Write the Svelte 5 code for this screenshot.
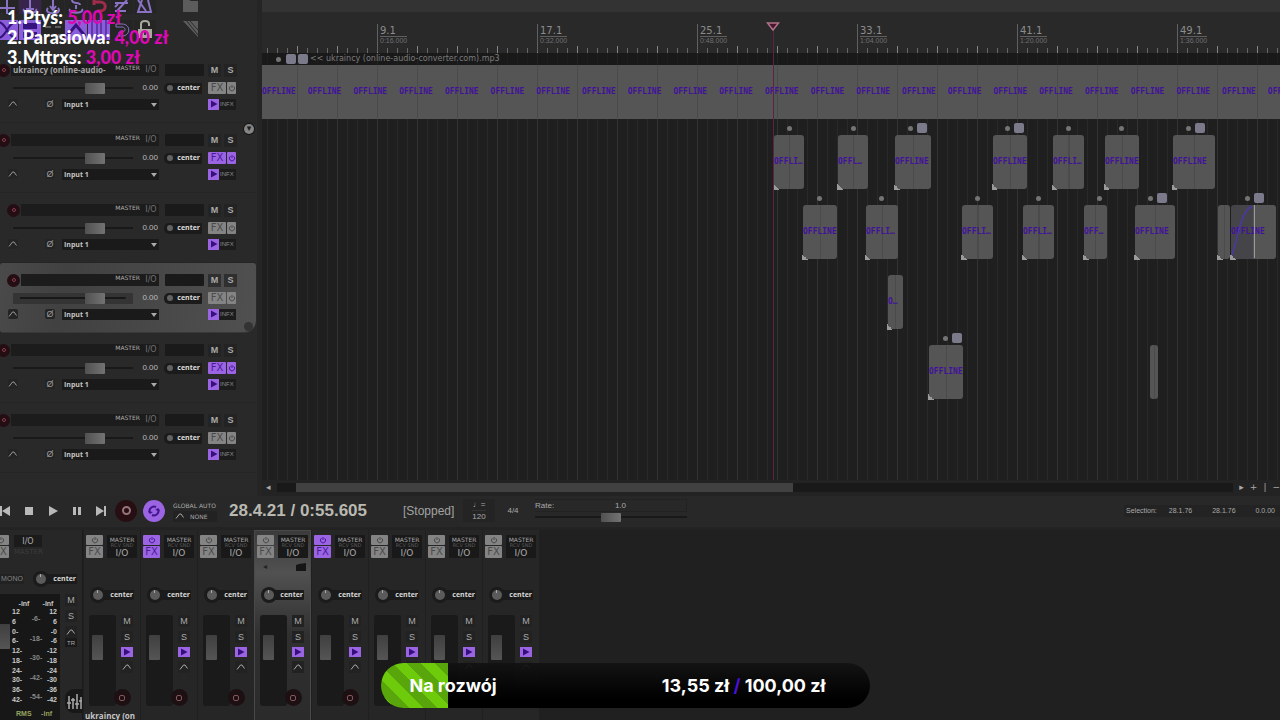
<script>
  const donors = [
    { name: 'Ptyś', amount: '5,00 zł' },
    { name: 'Parasiowa', amount: '4,00 zł' },
    { name: 'Mttrxs', amount: '3,00 zł' }
  ];

  const tracks = [
    { name: 'ukraincy (online-audio-', fx: false, nested: false, selected: false },
    { name: '', fx: true, nested: false, selected: false },
    { name: '', fx: false, nested: true, selected: false },
    { name: '', fx: false, nested: true, selected: true },
    { name: '', fx: true, nested: false, selected: false },
    { name: '', fx: false, nested: false, selected: false }
  ];

  // Clip start, width and marker dot offset are in timeline pixels.
  const lanes = [
    [],
    [
      { x: 512, w: 30, t: 'OFFLI…', dot: 13 },
      { x: 576, w: 30, t: 'OFFL…', dot: 13 },
      { x: 633, w: 36, t: 'OFFLINE', dot: 13, badge: true },
      { x: 731, w: 34, t: 'OFFLINE', dot: 12, badge: true },
      { x: 791, w: 31, t: 'OFFLI…', dot: 13 },
      { x: 843, w: 34, t: 'OFFLINE', dot: 14 },
      { x: 911, w: 42, t: 'OFFLINE', dot: 13, badge: true }
    ],
    [
      { x: 541, w: 34, t: 'OFFLINE', dot: 14 },
      { x: 604, w: 32, t: 'OFFLI…', dot: 13 },
      { x: 700, w: 31, t: 'OFFLI…', dot: 13 },
      { x: 761, w: 31, t: 'OFFLI…', dot: 13 },
      { x: 822, w: 23, t: 'OFF…', dot: 13 },
      { x: 873, w: 40, t: 'OFFLINE', dot: 13, badge: true },
      { x: 956, w: 12, t: '' },
      { x: 969, w: 45, t: 'OFFLINE', dot: 14, badge: true, fade: true }
    ],
    [{ x: 626, w: 15, t: 'O…' }],
    [
      { x: 667, w: 34, t: 'OFFLINE', dot: 14, badge: true },
      { x: 888, w: 8, t: '', bare: true }
    ],
    []
  ];

  const marks = [
    { x: 115, bar: '9.1', time: '0:16.000' },
    { x: 275, bar: '17.1', time: '0:32.000' },
    { x: 435, bar: '25.1', time: '0:48.000' },
    { x: 595, bar: '33.1', time: '1:04.000' },
    { x: 755, bar: '41.1', time: '1:20.000' },
    { x: 915, bar: '49.1', time: '1:36.000' }
  ];

  const strips = [
    { name: 'ukraincy (on', n: 1 },
    { name: '', n: 2, fx: true },
    { name: '', n: 3 },
    { name: '', n: 4, selected: true },
    { name: '', n: 5, fx: true },
    { name: '', n: 6 },
    { name: '', n: 7 },
    { name: '', n: 8 }
  ];

  const scaleLeft = ['12', '6', '0-', '6-', '12-', '18-', '24-', '30-', '36-', '42-'];
  const scaleMid = ['-6-', '-18-', '-30-', '-42-', '-54-'];
  const scaleRight = ['12', '6', '-0', '-6', '-12', '-18', '-24', '-30', '-36', '-42'];

  const goal = { raised: 13.55, target: 100 };
</script>

{#snippet power()}
  <svg viewBox="0 0 8 8" width="8" height="8" fill="none" stroke="currentColor"><path d="M2.4 2.2a2.6 2.6 0 1 0 3.2 0M4 1v3" /></svg>
{/snippet}

{#snippet envelope()}
  <svg viewBox="0 0 10 8" width="10" height="8" fill="none" stroke="currentColor"><path d="M1 6.500L4.500 2H6l2.500 3.500" /></svg>
{/snippet}

{#snippet playGlyph()}
  <svg viewBox="0 0 8 8" width="8" height="8" fill="currentColor"><path d="M1 .5v7L7.5 4z" /></svg>
{/snippet}

<div class="app">
  <div class="workspace">
    <aside class="panel">
      <div class="toolbar">
        <button class="tool" aria-label="New project"><svg viewBox="0 0 20 20"><path d="M10 0v15M2 8h16M4 14c3 4 9 4 12 0" /></svg></button>
        <button class="tool dim" aria-label="Open project"><svg viewBox="0 0 20 20"><path d="M10 0v9M4 9c-3 5 15 5 12 0M6 9h8" /></svg></button>
        <button class="tool" aria-label="Save project"><svg viewBox="0 0 20 20"><path d="M10 0v9M5 8c-6 7 16 7 10 0M7 6l3 4 3-4" /></svg></button>
        <button class="tool" aria-label="Project settings"><svg viewBox="0 0 20 20"><path d="M6 0c0 5 8 1 8 5M10 5v4M4 9c-3 5 15 5 12 0" /></svg></button>
        <button class="tool red" aria-label="Undo"><svg viewBox="0 0 20 20"><path d="M4 2h7c7 0 7 9 0 9H8M5 0v5" stroke-width="3" /></svg></button>
        <button class="tool" aria-label="Redo"><svg viewBox="0 0 20 20"><path d="M3 3h13M15 0L5 11M3 11h11M3 7l3-3" /></svg></button>
        <button class="tool" aria-label="Metronome"><svg viewBox="0 0 20 20"><path d="M7 0L3 12h13L13 0M11 11L3 0" /></svg></button>
        <span></span>
        <button class="tool grey" aria-label="Folder"><svg viewBox="0 0 20 20"><path d="M2 0h6l2 1h7v11H2z" fill="currentColor" stroke="none" /></svg></button>

        <button class="tool on" aria-label="Auto-crossfade"><svg viewBox="0 0 20 20"><path d="M1 2c8 0 10 16 18 16M1 18C9 18 11 2 19 2" /></svg></button>
        <button class="tool on" aria-label="Item grouping"><svg viewBox="0 0 20 20"><path d="M4 4h12v4H4zM4 13h12v4H4z" fill="currentColor" /></svg></button>
        <button class="tool grey" aria-label="Ripple editing"><svg viewBox="0 0 20 20"><path d="M2 6h6v2H2zM12 6h6v2h-6zM1 14h4v3H1zM8 14h4v3H8zM15 14h4v3h-4z" fill="currentColor" stroke="none" /></svg></button>
        <button class="tool on" aria-label="Envelope points"><svg viewBox="0 0 20 20"><path d="M1 16L10 5l9 11" stroke-width="3" /></svg></button>
        <button class="tool on" aria-label="Grid lines"><svg viewBox="0 0 20 20"><path d="M3 0v20M8 0v20M12 0v20M17 0v20" stroke-width="1" /></svg></button>
        <button class="tool" aria-label="Snap"><svg viewBox="0 0 20 20"><path d="M4 4h6c9 0 9 12 0 12H7M4 4v3h6c4 0 4 5 0 5H7v4" stroke-width="1" /></svg></button>
        <button class="tool light" aria-label="Lock"><svg viewBox="0 0 20 20"><path d="M6 9V4c0-4 8-4 8 0v2" /><path d="M4 10h12v7H4z" fill="currentColor" /><path d="M10 12v3" stroke="#333" /></svg></button>
        <span></span>
        <button class="tool grey" aria-label="Theme"><svg viewBox="0 0 20 20"><path d="M2 1h15v16z" fill="currentColor" stroke="none" /><path d="M5 0l12 15M9 1l8 9" stroke="#2b2b2b" stroke-width="1" /></svg></button>
      </div>

      {#each tracks as track, i}
        <section class="track" class:selected={track.selected} class:nested={track.nested} aria-label="Track {i + 1}">
          <div class="line">
            <button class="rec" aria-label="Record arm"><i></i></button>
            <div class="name"><span>{track.name}</span><em>MASTER</em><button class="io">I/O</button></div>
            <div class="meter"></div>
            <div class="pair"><button>M</button><button>S</button></div>
          </div>
          <div class="line second">
            <input class="volume" type="range" min="0" max="100" value="72" aria-label="Volume" />
            <output>0.00</output>
            <div class="pan"><i></i><span>center</span></div>
            <div class="fx" class:active={track.fx}><button>FX</button><button aria-label="FX bypass">{@render power()}</button></div>
          </div>
          <div class="line third">
            <button class="small" aria-label="Envelopes">{@render envelope()}</button>
            <button class="small phase">Ø</button>
            <div class="choose">
              <select aria-label="Record input"><option>Input 1</option></select>
            </div>
            <div class="monitor"><button aria-label="Monitor">{@render playGlyph()}</button><span>INFX</span></div>
          </div>
          {#if i === 1}<i class="collapse">▾</i>{/if}
          {#if track.selected}<i class="corner"></i>{/if}
        </section>
      {/each}
    </aside>

    <main class="arrange">
      <div class="strip-top"></div>
      <div class="ruler">
        {#each marks as m}
          <div class="mark" style="left: {m.x}px"><b>{m.bar}</b><small>{m.time}</small></div>
        {/each}
      </div>
      <div class="lanes">
        {#each lanes as lane, i}
          <div class="lane">
            {#if i === 0}
              <div class="title"><i class="dot"></i><i class="badge"></i><i class="badge"></i><span>&lt;&lt; ukraincy (online-audio-converter.com).mp3</span></div>
              <div class="long">
                {#each Array(30) as _}<span>OFFLINE</span>{/each}
              </div>
            {/if}
            {#each lane as c}
              <div class="clip" class:faded={c.fade} style="left: {c.x}px; width: {c.w}px">
                {#if c.dot}<i class="dot" style="left: {c.dot}px"></i>{/if}
                {#if c.badge}<i class="badge" style="left: {c.dot + 9}px"></i>{/if}
                <span>{c.t}</span>
                {#if c.fade}<svg viewBox="0 0 24 53" width="24" height="53" fill="none"><path d="M0 52C8 34 8 8 21 1" stroke="#4a37a8" stroke-width="1.500" /><path d="M23.500 0v53" stroke="#999" /></svg>{/if}
                {#if !c.bare}<i class="handle"></i>{/if}
              </div>
            {/each}
          </div>
        {/each}
      </div>
      <div class="scroll"><span>◂</span><div class="rail"><div class="grip"></div></div><span>▸</span><span>+</span><span>|</span><span>−</span></div>
      <div class="playhead">
        <svg viewBox="0 0 14 10" width="14" height="10"><path d="M1.500 1h11L7 8z" fill="#4a1530" stroke="#b07488" stroke-width="1.500" /></svg>
      </div>
    </main>
  </div>

  <div class="transport">
    <div class="buttons">
      <button aria-label="Go to start"><svg viewBox="0 0 12 12"><path d="M1 1h2v10H1zM11 1v10L3 6z" /></svg></button>
      <button aria-label="Stop"><svg viewBox="0 0 12 12"><path d="M2 2h8v8H2z" /></svg></button>
      <button aria-label="Play"><svg viewBox="0 0 12 12"><path d="M2 1v10l9-5z" /></svg></button>
      <button aria-label="Pause"><svg viewBox="0 0 12 12"><path d="M2 2h3v8H2zM7 2h3v8H7z" /></svg></button>
      <button aria-label="Go to end"><svg viewBox="0 0 12 12"><path d="M9 1h2v10H9zM1 1v10l8-5z" /></svg></button>
    </div>
    <button class="round record" aria-label="Record"><i></i></button>
    <button class="round loop" aria-label="Repeat"><svg viewBox="0 0 14 14" width="14" height="14" fill="none" stroke="currentColor" stroke-width="2"><path d="M3 9A4.500 4.500 0 0 1 9 3M11 5a4.500 4.500 0 0 1-6 6" /><path d="M1 7l2 3 3-2zM13 7l-2-3-3 2z" fill="currentColor" stroke="none" /></svg></button>
    <div class="auto"><span>GLOBAL AUTO</span><span class="none">{@render envelope()} NONE</span></div>
    <div class="time">28.4.21 / 0:55.605</div>
    <div class="state">[Stopped]</div>
    <div class="tempo"><span>♩=</span><span>120</span></div>
    <div class="signature">4/4</div>
    <div class="rate">
      <div><label for="rate">Rate:</label><output>1.0</output></div>
      <input id="rate" class="volume" type="range" min="0" max="100" value="50" />
    </div>
    <div class="selection"><span>Selection:</span><span>28.1.76</span><span>28.1.76</span><span>0.0.00</span></div>
  </div>

  <div class="mixer">
    <section class="master" aria-label="Master">
      <div class="head">
        <div class="fxcol"><button aria-label="FX bypass">{@render power()}</button><button>FX</button></div>
        <div class="mio"><button>I/O</button><span>MASTER</span></div>
      </div>
      <div class="mpan"><button>MONO</button><i class="knob"></i><span class="center">center</span></div>
      <div class="body">
        <div class="levels">
          <input class="fader" type="range" min="0" max="100" value="55" aria-label="Master volume" />
          <div class="peaks"><span>-inf</span><span>-inf</span></div>
          <div class="scales">
            <div>{#each scaleLeft as s}<span>{s}</span>{/each}</div>
            <div class="mid">{#each scaleMid as s}<span>{s}</span>{/each}</div>
            <div class="right">{#each scaleRight as s}<span>{s}</span>{/each}</div>
          </div>
          <div class="rms"><span>RMS</span><span>-inf</span></div>
        </div>
        <div class="side">
          <button>M</button><button>S</button>
          <button aria-label="Envelopes">{@render envelope()}</button>
          <button class="trim">TR</button>
          <button class="sliders" aria-label="Mixer settings"><svg viewBox="0 0 16 16" width="16" height="16" fill="none" stroke="currentColor" stroke-width="1.500"><path d="M3 3v13M7 5v11M11 1v15M15 4v12M1 10h4M5 7h4M9 11h4M13 8h3" /></svg></button>
        </div>
      </div>
    </section>

    {#each strips as s}
      <section class="channel" class:selected={s.selected} aria-label="Channel {s.n}">
        <div class="head">
          <div class="fxcol" class:active={s.fx}><button aria-label="FX bypass">{@render power()}</button><button>FX</button></div>
          <button class="route"><span>MASTER</span><em>RCV SND</em><b>I/O</b></button>
        </div>
        <div class="folder">
          {#if s.selected}<span>◂</span><svg viewBox="0 0 10 8" width="10" height="8"><path d="M0 2l3-1 7-1v8H0z" fill="#161616" /></svg>{:else}<span></span>{/if}
        </div>
        <div class="cpan"><i class="knob"></i><span class="center">center</span></div>
        <div class="strip">
          <div class="well"><input class="fader" type="range" min="0" max="100" value="70" aria-label="Volume" /></div>
          <div class="side">
            <button>M</button><button>S</button>
            <button class="mon" aria-label="Monitor">{@render playGlyph()}</button>
            <button aria-label="Envelopes">{@render envelope()}</button>
            <button class="arm" aria-label="Record arm"><i></i></button>
          </div>
        </div>
        <div class="label">{s.name}</div>
      </section>
    {/each}
  </div>

  <ol class="donors">
    {#each donors as d, i}
      <li><span>{i + 1}.</span><span>{d.name}: <b>{d.amount}</b></span></li>
    {/each}
  </ol>

  <div class="goal">
    <div class="fill" style="width: {(goal.raised / goal.target) * 100}%"></div>
    <span>Na rozwój</span>
    <span>13,55 zł <i>/</i> 100,00 zł</span>
  </div>
</div>

<style>
  :global(body) { margin: 0; background: #202020; }
  .app, .app * { box-sizing: border-box; }
  .app {
    position: relative;
    display: flex;
    flex-direction: column;
    height: 100vh;
    overflow: hidden;
    background: #282828;
    color: #aaa;
    font: 8px/12px "Liberation Sans", sans-serif;
  }
  button { border: 0; padding: 0; margin: 0; background: none; color: inherit; font: inherit; display: flex; align-items: center; justify-content: center; }
  i { display: block; font-style: normal; }
  svg { display: block; flex: none; }

  .workspace { display: grid; grid-template-columns: 262px minmax(0, 1fr); flex: none; }
  .panel { background: #292929; border-right: 5px solid #252525; padding-bottom: 21px; overflow: hidden; }
  .toolbar { display: grid; grid-template-columns: repeat(9, 22px); grid-template-rows: 14px 20px; row-gap: 6px; column-gap: 1px; height: 53px; margin-left: -4px; }
  .tool { color: #8a72c4; background: #252525; overflow: hidden; align-items: flex-start; }
  .tool svg { width: 20px; height: 20px; fill: none; stroke: currentColor; stroke-width: 2; }
  .tool.dim { background: #38254c; }
  .tool.on { background: #8b5ddb; color: #35127c; }
  .tool.red { color: #a02c4c; }
  .tool.grey { color: #5c5c5c; }
  .tool.light { color: #a8a8a0; }
  .toolbar .tool:nth-child(9n) { background: none; }

  .track { position: relative; height: 70px; padding: 11px 0 0; width: 256px; border-bottom: 1px solid #252525; }
  .track.selected { background: linear-gradient(100deg, #4a4a4a, #414141 25%, #505050); border-radius: 3px 3px 12px 3px; border-color: #383838; }
  .line { display: flex; align-items: center; height: 12px; }
  .second { margin-top: 6px; padding-left: 13px; }
  .third { margin-top: 4px; padding-left: 8px; }
  .rec { width: 13px; height: 13px; margin: 0 0 0 -3px; border-radius: 50%; background: #240d13; flex: none; }
  .nested .rec { margin-left: 7px; }
  .rec i { width: 4px; height: 4px; border: 1px solid #874050; border-radius: 50%; }
  .name { flex: none; width: 148px; display: flex; align-items: center; height: 12px; margin-left: 1px; background: #1c1c1c; padding-right: 1px; }
  .nested .name { width: 138px; }
  .name span { flex: 1; white-space: nowrap; font: 700 8px/12px "Open Sans", sans-serif; color: #a5a5a5; padding-left: 2px; }
  .name em { font: 6px/8px "DejaVu Sans", sans-serif; align-self: flex-start; margin: 0 4px 0 1px; color: #b0b0b0; }
  .io { width: 14px; font: 8px/12px "DejaVu Sans", sans-serif; color: #717171; }
  .meter { width: 39px; height: 12px; margin: 0 4px 0 6px; background: #1a1a1a; border-radius: 1px; }
  .pair { display: flex; gap: 3px; }
  .pair button { width: 13px; height: 13px; background: #232323; font-weight: 700; font-size: 9px; }
  .selected .pair button { background: #2f2f2f; }
  .volume { appearance: none; width: 120px; height: 11px; margin: 0; background: linear-gradient(#191919, #191919) center / 100% 2px no-repeat; }
  .selected .volume { background: linear-gradient(#181818, #181818) center / 88% 2px no-repeat, #343434; }
  .volume::-webkit-slider-thumb { appearance: none; width: 20px; height: 11px; border-radius: 1px; background: linear-gradient(90deg, #515151, #737373); }
  .second output { width: 25px; text-align: right; color: #bbb; }
  .pan { display: flex; align-items: center; justify-content: space-between; width: 38px; height: 11px; margin: 0 6px; padding: 0 2px 0 3px; border-radius: 5px 1px 1px 5px; background: #1b1b1b; color: #ddd; }
  .pan i { width: 6px; height: 6px; border-radius: 50%; background: #626262; }
  .pan span, .center { font: 700 7px/10px "Open Sans", sans-serif; }
  .fx { display: flex; gap: 1px; color: #4b4b4b; }
  .fx button { height: 12px; background: #848484; font: 9px/12px "DejaVu Sans", sans-serif; border-radius: 1px; overflow: hidden; }
  .fx button:first-child { width: 18px; font-size: 10px; }
  .fx button:last-child { width: 9px; }
  .fx.active button { background: #9b64e3; color: #4a1c99; }
  .small { width: 10px; height: 10px; color: #999; background: #242424; border-radius: 2px; font-size: 9px; }
  .phase { margin: 0 7px 0 27px; }
  .choose { position: relative; width: 97px; height: 11px; background: #1a1a1a; }
  .choose::after { content: ""; position: absolute; right: 2px; top: 4px; border: 3px solid transparent; border-top: 4px solid #aaa; border-bottom: 0; }
  select { appearance: none; width: 100%; height: 11px; border: 0; padding: 0 2px; background: none; color: #c4c4c4; font: 700 7px/11px "Open Sans", sans-serif; display: block; }
  .monitor { display: flex; width: 28px; margin-left: 49px; height: 11px; background: #1c1c1c; font-size: 6px; color: #8b8b8b; gap: 1px; line-height: 11px; white-space: nowrap; }
  .monitor button, .mon { width: 11px; height: 11px; background: #9b64e3; color: #35107c; flex: none; }
  .collapse { position: absolute; right: 2px; top: 1px; width: 10px; height: 10px; border-radius: 50%; background: #858585; color: #1b1b1b; font: 9px/9px "DejaVu Sans", sans-serif; text-align: center; box-shadow: 0 0 0 1px #151515; }
  .corner { position: absolute; right: 3px; bottom: 1px; width: 9px; height: 9px; border-radius: 50%; background: #333; }

  .arrange { position: relative; display: flex; flex-direction: column; background: #202020; overflow: hidden; }
  .strip-top { height: 12px; background: #333; }
  .ruler { position: relative; height: 41px; background:
    repeating-linear-gradient(90deg, #858585 0 1px, transparent 1px 40px) 35px 100% / 100% 7px no-repeat,
    repeating-linear-gradient(90deg, #666 0 1px, transparent 1px 10px) 5px 100% / 100% 5px no-repeat, #292929; }
  .mark { position: absolute; top: 12px; bottom: 1px; padding: 1px 0 0 2px; border-left: 1px solid #606060; color: #8c8c8c; }
  .mark b { display: block; font: 10px/11px "DejaVu Sans", sans-serif; }
  .mark small { display: block; font: 7px/8px "Liberation Sans", sans-serif; color: #707070; border-top: 1px solid #606060; }
  .lanes { height: 427px; background:
    repeating-linear-gradient(90deg, #333 0 1px, transparent 1px 40px) 35px 0 / 100% 100% no-repeat,
    repeating-linear-gradient(90deg, #292929 0 1px, transparent 1px 10px) 5px 0 / 100% 100% no-repeat, #1f1f1f; }
  .lane { position: relative; height: 70px; }
  .title { display: flex; align-items: center; height: 12px; padding-left: 14px; gap: 2px; font: 8px/12px "DejaVu Sans", sans-serif; color: #7c7c7c; white-space: nowrap; background: rgba(20, 20, 20, .5); }
  .dot { width: 5px; height: 5px; border-radius: 50%; background: #747474; }
  .title .dot { margin-right: 3px; }
  .badge { width: 10px; height: 10px; border-radius: 2px; background: #7b7a8b; }
  .long { display: flex; gap: 12px; height: 54px; align-items: center; overflow: hidden; background: repeating-linear-gradient(90deg, #4a4a4a 0 1px, transparent 1px 40px) 35px 0 no-repeat, #555; }
  .long span, .clip span { font: 700 8px/12px "DejaVu Sans Mono", monospace; color: #42129a; }
  .clip { position: absolute; top: 12px; height: 54px; display: flex; align-items: center; border-radius: 3px; background: linear-gradient(90deg, transparent 50%, #4b4b4b 50% calc(50% + 1px), transparent calc(50% + 1px)), #555; }
  .clip .dot { position: absolute; top: -9px; }
  .clip .badge { position: absolute; top: -12px; }
  .clip svg { position: absolute; left: 0; top: 0; }
  .clip.faded { background: linear-gradient(90deg, #454549 50%, #555 50%); }
  .handle { position: absolute; left: -1px; bottom: -1px; width: 6px; height: 6px; background: linear-gradient(45deg, #9b9b9b 50%, transparent 50%); }
  .scroll { display: flex; align-items: center; gap: 6px; height: 16px; padding: 0 0 2px 4px; background: #232323; color: #aaa; font: 9px/14px "DejaVu Sans", sans-serif; }
  .rail { flex: 1; height: 9px; background: #191919; }
  .grip { margin-left: 2%; width: 52%; height: 9px; background: #414141; }
  .playhead { position: absolute; left: 511px; top: 22px; bottom: 16px; width: 1px; background: #5c2342; }
  .playhead svg { margin-left: -7px; }

  .transport { display: flex; align-items: center; flex: none; height: 34px; padding-bottom: 2px; background: #282828; border-bottom: 3px solid #232323; white-space: nowrap; }
  .buttons { display: flex; gap: 12px; margin-left: -1px; fill: #b9b9b9; }
  .buttons button, .buttons svg { width: 12px; height: 12px; }
  .round { width: 22px; height: 22px; border-radius: 50%; margin-left: 6px; flex: none; }
  .record { background: #270e13; margin-left: 8px; }
  .record i { width: 9px; height: 9px; border: 2px solid #97757a; border-radius: 50%; }
  .loop { background: #9b64e3; color: #42158f; }
  .auto { display: flex; flex-direction: column; width: 44px; margin-left: 8px; font: 6px/11px "DejaVu Sans", sans-serif; }
  .none { display: flex; align-items: center; gap: 5px; padding-left: 2px; background: #222; }
  .time { margin-left: 12px; width: 174px; color: #b9b9b1; font: 700 17px/20px "Liberation Sans", sans-serif; }
  .state { width: 60px; color: #a3a3a3; font-size: 12px; }
  .tempo { display: flex; flex-direction: column; align-items: center; width: 32px; line-height: 11px; background: #242424; }
  .tempo span + span { border-top: 1px solid #333; }
  .signature { width: 32px; margin-left: 2px; text-align: center; }
  .rate { width: 156px; margin-left: 4px; padding: 0 2px; }
  .rate div { display: flex; justify-content: space-between; line-height: 11px; border: 1px solid #222; border-left: 0; padding-right: 60px; }
  .rate .volume { width: 100%; display: block; height: 10px; }
  .rate .volume::-webkit-slider-thumb { height: 9px; }
  .selection { display: flex; margin-left: auto; gap: 20px; padding: 0 5px 0 2px; background: #232323; font-size: 7px; }
  .selection span:first-child { margin-right: -8px; }

  .mixer { display: flex; flex: 1; min-height: 0; overflow: hidden; background: #202020; }
  .master { width: 83px; flex: none; background: #272727; border-right: 1px solid #1b1b1b; }
  .head { display: flex; height: 28px; padding-top: 5px; }
  .fxcol { width: 17px; height: 23px; display: grid; grid-template-rows: 10px 12px; gap: 1px; color: #4b4b4b; flex: none; }
  .fxcol button { background: #848484; border-radius: 1px; font: 10px/12px "DejaVu Sans", sans-serif; overflow: hidden; }
  .fxcol.active button { background: #9b64e3; color: #4a1c99; }
  .master .fxcol { margin-left: -8px; }
  .mio { margin-left: 5px; width: 28px; font: 7px/11px "DejaVu Sans", sans-serif; color: #3c3c3c; }
  .mio button { width: 28px; height: 12px; background: #1b1b1b; color: #aaa; font-size: 8px; }
  .mpan { display: flex; align-items: center; height: 36px; padding: 5px 5px 0 0; font-size: 7px; }
  .mpan button { width: 24px; height: 10px; background: #222; color: #828282; }
  .knob { width: 10px; height: 10px; border-radius: 50%; background: linear-gradient(90deg, transparent 4px, #aaa 4px 5px, transparent 5px) top / 10px 3px no-repeat, #5b5b5b; box-shadow: 0 0 0 3px #1b1b1b; flex: none; }
  .mpan .knob { margin-left: 12px; }
  .center { width: 31px; padding-right: 1px; text-align: right; background: #1b1b1b; color: #d8d8d8; border-radius: 1px; }
  .body { display: flex; }
  .levels { position: relative; width: 60px; height: 126px; background: #171717; padding: 6px 0 0 12px; color: #c9c9c9; font: 700 7px/8px "Liberation Sans", sans-serif; }
  .levels .fader { position: absolute; left: -2px; top: 0; width: 12px; height: 91px; }
  .peaks { display: flex; justify-content: space-around; }
  .scales { display: grid; grid-template-columns: 1fr 1fr 1fr; height: 96px; }
  .scales div { display: flex; flex-direction: column; justify-content: space-between; padding-right: 1px; }
  .scales .mid { text-align: center; padding: 7px 0 3px; color: #888; }
  .scales .right { text-align: right; padding-right: 3px; }
  .rms { display: flex; justify-content: space-between; padding: 6px 8px 0 4px; color: #98a360; }
  .side { display: flex; flex-direction: column; align-items: center; gap: 4px; }
  .side button { width: 12px; height: 12px; background: #222; font-size: 9px; }
  .master .side { width: 22px; }
  .master .side .trim { height: 9px; font-size: 6px; background: #191919; margin-top: -4px; }
  .master .side .sliders { width: 18px; height: 24px; margin-top: 38px; margin-left: 6px; border-radius: 9px 0 0 9px; background: #181818; }

  .channel { width: 57px; flex: none; background: #262626; border-left: 1px solid #202020; }
  .channel.selected { background: linear-gradient(#3b3b3b, #515151 22%, #303030 55%, #2b2b2b); border: 1px solid #494949; border-width: 1px 1px 0; }
  .channel .head { padding-left: 2px; gap: 4px; }
  .channel.selected .head { padding-top: 4px; height: 27px; }
  .route { flex-direction: column; width: 30px; height: 23px; background: #191919; font: 6px/7px "DejaVu Sans", sans-serif; }
  .route em { font-style: normal; font-size: 5px; line-height: 5px; color: #5b5b5b; }
  .route b { font: 9px/10px "DejaVu Sans", sans-serif; }
  .folder { display: flex; justify-content: space-between; align-items: center; height: 18px; padding: 0 4px 0 8px; color: #222; }
  .cpan { display: flex; align-items: center; height: 36px; padding: 1px 6px 0 9px; }
  .strip { display: flex; gap: 5px; padding: 3px 0 0 5px; }
  .well { width: 27px; height: 91px; padding-left: 3px; background: #1a1a1a; border-radius: 3px; }
  .fader { appearance: none; writing-mode: vertical-lr; direction: rtl; width: 11px; height: 91px; margin: 0; display: block; background: none; }
  .fader::-webkit-slider-thumb { appearance: none; width: 11px; height: 25px; border-radius: 1px; background: linear-gradient(#3f3f3f, #555); }
  .channel .side .mon { height: 10px; background: #9b64e3; }
  .channel .side .arm { width: 17px; height: 17px; margin: 12px 0 0 -10px; border-radius: 50%; background: #1d1013; }
  .arm i { width: 6px; height: 6px; border: 1px solid #87555c; border-radius: 2px; }
  .label { height: 16px; margin-top: 4px; padding-left: 1px; font: 700 8px/12px "Open Sans", sans-serif; color: #c5c5c5; white-space: nowrap; }

  .donors { position: absolute; left: 7px; top: 7px; margin: 0; padding: 0; list-style: none; color: #fff; font: 900 18px/20px Lato, sans-serif; }
  .donors li { display: flex; gap: 1px; }
  .donors b { font-weight: 900; color: #dc08b4; }

  .goal { position: absolute; left: 29.8%; right: 32%; bottom: 12px; height: 45px; padding: 0 45px 0 28px; display: flex; align-items: center; justify-content: space-between; border-radius: 23px; overflow: hidden; background: linear-gradient(rgba(18, 18, 18, .92), #000 80%); color: #fff; font: 700 18px/24px Inter, sans-serif; white-space: nowrap; }
  .goal span { position: relative; }
  .goal i { display: inline; color: #4a10d8; }
  .fill { position: absolute; left: 0; top: 0; bottom: 0; background: repeating-linear-gradient(45deg, #6dcb0b 0 10px, #58a60b 10px 20px); }
</style>
